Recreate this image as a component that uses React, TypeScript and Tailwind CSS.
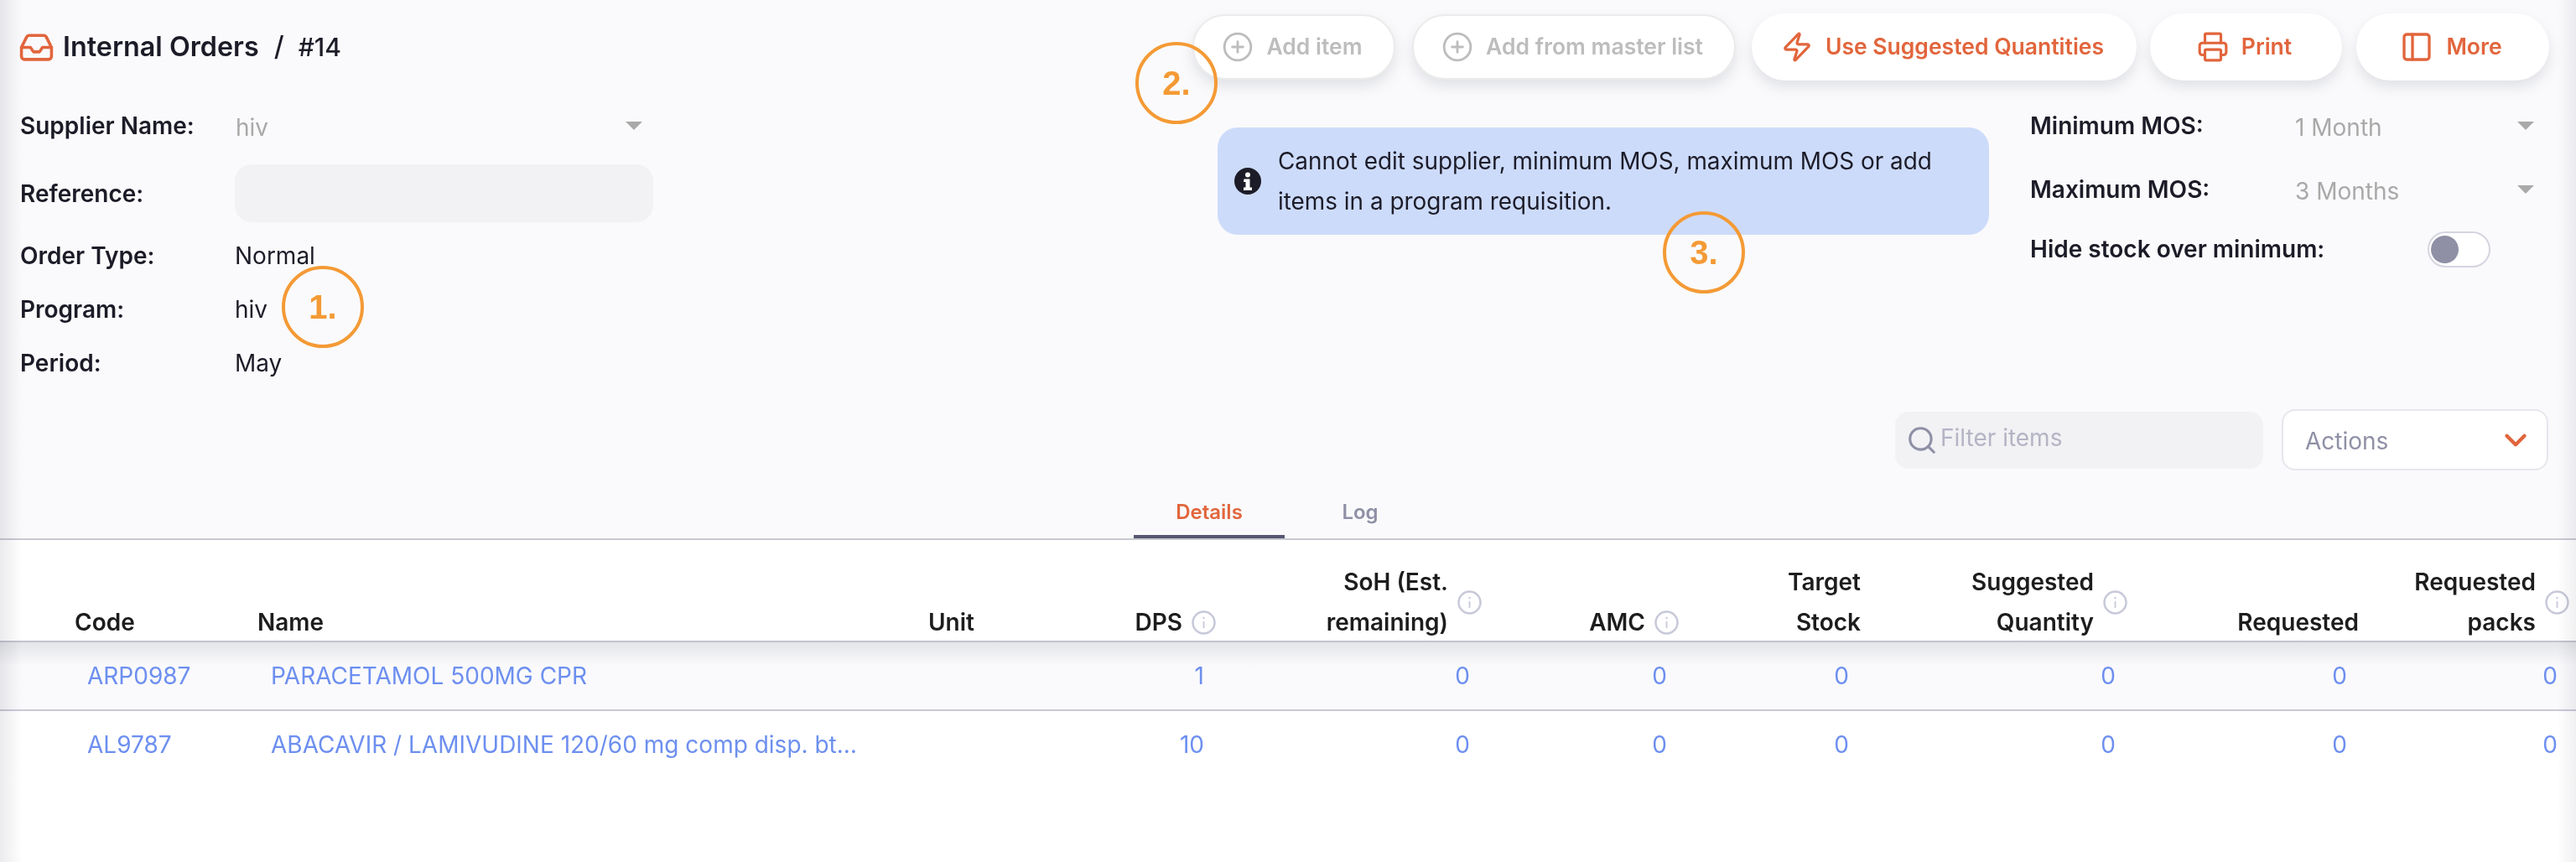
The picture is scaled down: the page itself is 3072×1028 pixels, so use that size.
import React from "react";
import { CirclePlus, Zap, Printer, PanelLeft, Search, ChevronDown, Inbox } from "lucide-react";

function Callout({ n, className }: { n: string; className: string }) {
  return (
    <div className={"absolute w-[98px] h-[98px] rounded-full border-[4px] border-[#f49a35] flex items-center justify-center text-[40px] font-bold text-[#f49a35] [font-family:'Liberation_Sans',sans-serif] " + className}>
      {n}
    </div>
  );
}

function Btn({ icon, label, disabled, className }: { icon: React.ReactNode; label: string; disabled?: boolean; className: string }) {
  return (
    <div
      className={
        "flex items-center justify-center gap-[15px] rounded-[40px] bg-white text-[26.5px] font-semibold shadow-[0_8px_16px_rgba(96,97,112,0.16)] " +
        (disabled ? "h-[78px] mt-[1px] border-2 border-[#ebebeb] text-[#bdbdbd] pr-[4px] " : "h-[80px] text-[#e2653c] pr-[4px] ") +
        className
      }
    >
      {icon}
      <span>{label}</span>
    </div>
  );
}

function Caret() {
  return <div className="w-0 h-0 border-l-[10px] border-r-[10px] border-t-[10px] border-l-transparent border-r-transparent border-t-[#a9a9a9]" />;
}

function InfoI() {
  return (
    <svg width="29" height="29" viewBox="0 0 29 29" fill="none" className="shrink-0">
      <circle cx="14.5" cy="14.5" r="13" stroke="#c7c9d9" strokeWidth="2.5" />
      <line x1="14.5" y1="13" x2="14.5" y2="21" stroke="#c7c9d9" strokeWidth="1.8" />
      <circle cx="14.5" cy="9" r="1.2" fill="#c7c9d9" />
    </svg>
  );
}

function Th({ lines, info, align = "right" }: { lines: string[]; info?: boolean; align?: "left" | "right" }) {
  return (
    <div className={"flex items-center gap-[11px] -mb-[2px] " + (align === "right" ? "justify-end" : "justify-start")}>
      <div className={"leading-[48px] " + (align === "right" ? "text-right" : "text-left")}>
        {lines.map((l) => (
          <div key={l}>{l}</div>
        ))}
      </div>
      {info && <InfoI />}
    </div>
  );
}

const cols = "grid grid-cols-[218px_800px_193px_150px_317px_235px_217px_318px_276px_251px] pl-[89px]";

function Row({ code, name, dps, className }: { code: string; name: string; dps: string; className: string }) {
  return (
    <div className={cols + " h-[80px] items-center text-[28px] text-[#6d8fef] " + className}>
      <div className="pl-[15px]">{code}</div>
      <div className="pl-[16px] truncate pr-[8px]">{name}</div>
      <div />
      {[dps, "0", "0", "0", "0", "0", "0"].map((v, i) => (
        <div key={i} className="text-right pr-[14px]">{v}</div>
      ))}
    </div>
  );
}

function FormRow({ label, value }: { label: string; value: string }) {
  return (
    <div className="flex items-center h-[48px]">
      <div className="w-[256px] font-semibold">{label}</div>
      <div>{value}</div>
    </div>
  );
}

export default function App() {
  return (
    <div className="relative w-[3072px] h-[1028px] overflow-hidden bg-white text-[#1c1c28] text-[28px] [font-family:Inter,sans-serif]">
      <div className="h-[644px] bg-[#fafafc] border-b-[2px] border-[#c9c9d2] flex flex-col">
        <div className="flex h-[486px]">
          <div className="w-[1422px] pl-[24px] pt-[26px] flex flex-col">
            <div className="flex items-center h-[60px] text-[32.3px] font-semibold">
              <div className="-ml-[2px] w-[53px] shrink-0"><Inbox size={43} strokeWidth={2} color="#e2653c" /></div>
              <span>Internal Orders</span>
              <span className="font-medium ml-[18px]">/</span>
              <span className="font-medium ml-[17px] text-[30px]">#14</span>
            </div>
            <div className="mt-[40px] flex items-center h-[48px] w-[742px]">
              <div className="w-[257px] font-semibold">Supplier Name:</div>
              <div className="flex-1 text-[#a9a9a9] pt-[3px]">hiv</div>
              <Caret />
            </div>
            <div className="mt-[22px] flex items-center h-[69px]">
              <div className="w-[256px] font-semibold">Reference:</div>
              <div className="w-[499px] h-[69px] rounded-[20px] bg-[#f2f2f5]" />
            </div>
            <div className="mt-[16px]"><FormRow label="Order Type:" value="Normal" /></div>
            <div className="mt-[16px]"><FormRow label="Program:" value="hiv" /></div>
            <div className="mt-[16px]"><FormRow label="Period:" value="May" /></div>
          </div>
          <div className="flex-1 pt-[16px] flex flex-col">
            <div className="flex">
              <Btn disabled className="w-[242px]" label="Add item" icon={<CirclePlus size={38} strokeWidth={1.8} color="#bdbdbd" />} />
              <Btn disabled className="w-[386px] ml-[20px]" label="Add from master list" icon={<CirclePlus size={38} strokeWidth={1.8} color="#bdbdbd" />} />
              <Btn className="w-[459px] ml-[19px]" label="Use Suggested Quantities" icon={<Zap size={38} strokeWidth={2} />} />
              <Btn className="w-[229px] ml-[16px]" label="Print" icon={<Printer size={38} strokeWidth={2} />} />
              <Btn className="w-[230px] ml-[17px]" label="More" icon={<PanelLeft size={40} strokeWidth={2} />} />
            </div>
            <div className="flex mt-[56px]">
              <div className="ml-[30px] w-[920px] h-[128px] rounded-[24px] bg-[#cddbfb] flex items-center pl-[20px]">
                <svg width="32" height="32" viewBox="0 0 32 32" className="shrink-0">
                  <circle cx="16" cy="16" r="16" fill="#1c1c28" />
                  <circle cx="16" cy="8.5" r="3" fill="#fff" />
                  <path d="M11.5 13.5h7v10h2.5v3.5h-10v-3.5h2.5v-6.5h-2.5z" fill="#fff" />
                </svg>
                <div className="ml-[20px] leading-[48px] w-[800px] text-[27.9px]">
                  Cannot edit supplier, minimum MOS, maximum MOS or add items in a program requisition.
                </div>
              </div>
              <div className="ml-[49px] w-[601px] flex flex-col -mt-[26px]">
                <div className="flex items-center h-[48px]">
                  <div className="w-[316px] font-semibold">Minimum MOS:</div>
                  <div className="flex-1 text-[#a9a9a9] pt-[3px]">1 Month</div>
                  <Caret />
                </div>
                <div className="flex items-center h-[48px] mt-[28px]">
                  <div className="w-[316px] font-semibold">Maximum MOS:</div>
                  <div className="flex-1 text-[#a9a9a9] pt-[3px]">3 Months</div>
                  <Caret />
                </div>
                <div className="flex items-center h-[48px] mt-[23px]">
                  <div className="w-[474px] font-semibold">Hide stock over minimum:</div>
                  <div className="w-[75px] h-[43px] rounded-full border-[2px] border-[#d5d5e0] bg-white flex items-center pl-[2px]">
                    <div className="w-[33px] h-[33px] rounded-full bg-[#8f90a6]" />
                  </div>
                </div>
              </div>
            </div>
          </div>
        </div>
        <div className="flex items-center justify-end pr-[33px] mt-[2px]">
          <div className="w-[439px] h-[68px] rounded-[16px] bg-[#f2f2f5] flex items-center pl-[13px] gap-[3px]">
            <Search size={38} strokeWidth={2} color="#8f90a6" />
            <span className="-mt-[6px] text-[#b4b4c4]">Filter items</span>
          </div>
          <div className="ml-[22px] w-[318px] h-[73px] rounded-[16px] border-[2px] border-[#e6e6ee] bg-white flex items-center justify-between pl-[26px] pr-[16px] text-[#8f90a6]">
            <span className="pt-[3px]">Actions</span>
            <ChevronDown size={42} strokeWidth={2.5} color="#e2653c" />
          </div>
        </div>
        <div className="flex-1 flex items-end pl-[1352px] text-[24px] font-semibold">
          <div className="w-[180px] h-[66px] border-b-[4px] border-[#555770] text-center text-[#e2653c] pt-[17px]">Details</div>
          <div className="w-[180px] h-[66px] text-center text-[#8f90a6] pt-[17px]">Log</div>
        </div>
      </div>

      <div className={cols + " h-[120px] items-end border-b-[2px] border-[#c3c3cf] font-semibold text-[#1d1d1d] box-content"}>
        <Th lines={["Code"]} align="left" />
        <Th lines={["Name"]} align="left" />
        <Th lines={["Unit"]} align="left" />
        <Th lines={["DPS"]} info />
        <Th lines={["SoH (Est.", "remaining)"]} info />
        <Th lines={["AMC"]} info />
        <Th lines={["Target", "Stock"]} />
        <Th lines={["Suggested", "Quantity"]} info />
        <Th lines={["Requested"]} />
        <Th lines={["Requested", "packs"]} info />
      </div>
      <div className="relative">
        <div className="absolute inset-x-0 top-0 h-[28px] bg-gradient-to-b from-[#e4e5e9] to-transparent" />
        <Row code="ARP0987" name="PARACETAMOL 500MG CPR" dps="1" className="bg-[#fafafc] border-b-[2px] border-[#c9c9d9] box-content" />
        <Row code="AL9787" name="ABACAVIR / LAMIVUDINE 120/60 mg comp disp. bt…" dps="10" className="" />
      </div>

      <Callout n="1." className="left-[336px] top-[317px]" />
      <Callout n="2." className="left-[1354px] top-[50px]" />
      <Callout n="3." className="left-[1983px] top-[252px]" />
      <div className="absolute inset-y-0 left-0 w-[26px] bg-gradient-to-r from-[#ebebed] to-transparent mix-blend-multiply" />
      <div className="absolute inset-y-0 right-0 w-[22px] bg-gradient-to-l from-[#f0f0f2] to-transparent mix-blend-multiply" />
    </div>
  );
}
